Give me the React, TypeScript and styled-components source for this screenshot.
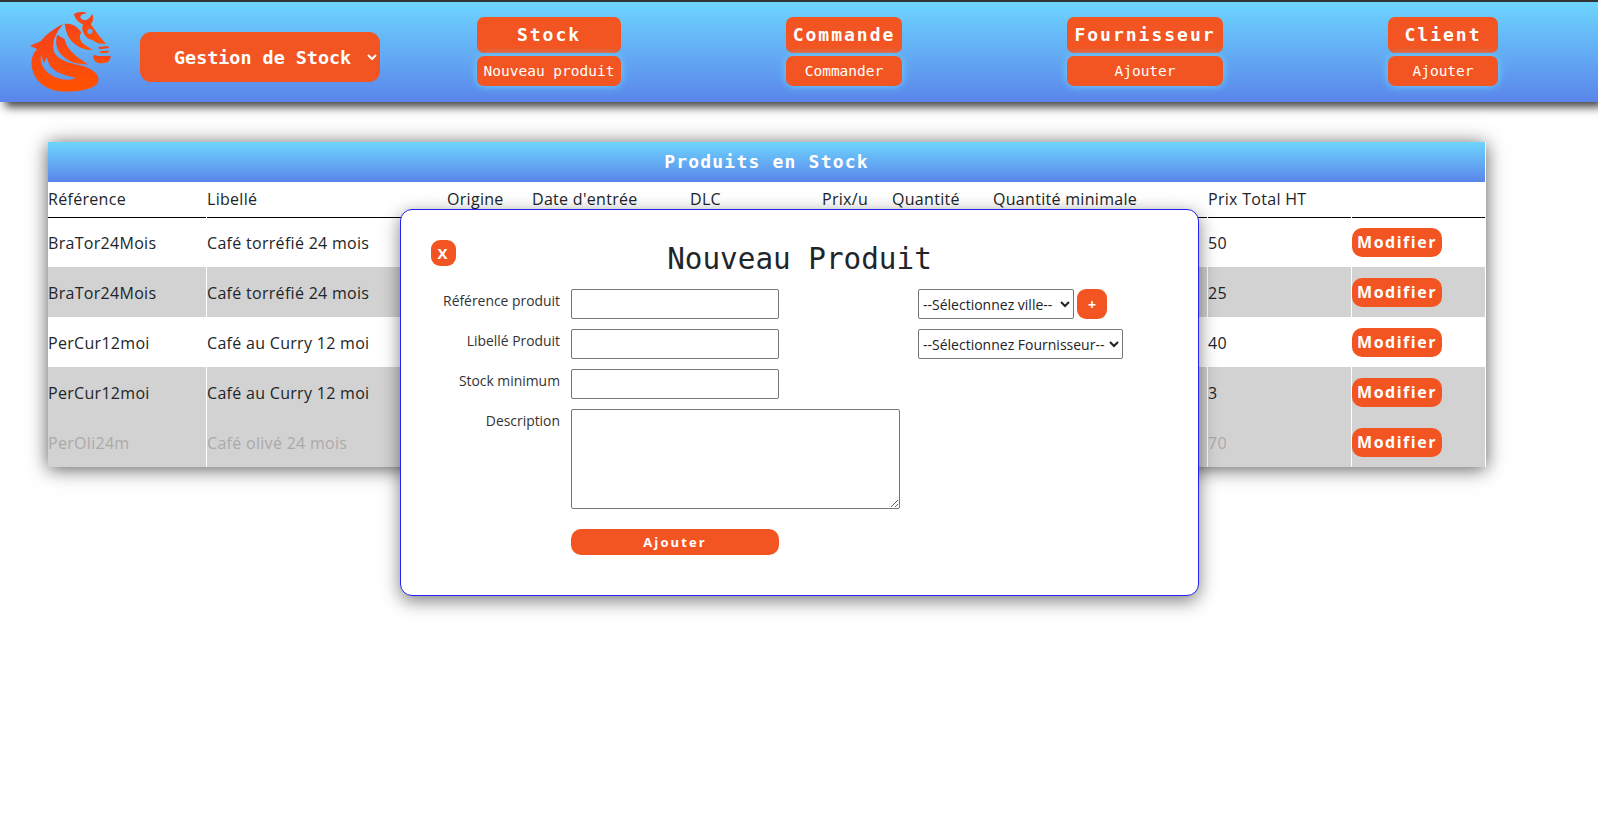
import styled, { createGlobalStyle } from 'styled-components';

const ORANGE = '#f25522';
const MONO = '"DejaVu Sans Mono", monospace';
const SKY = 'linear-gradient(to bottom, #6dd5fe, #5a85ea)';

const GlobalStyle = createGlobalStyle`
  body {
    margin: 0;
    background: #fff;
    color: #212529;
    font-family: "Open Sans", sans-serif;
  }
  * { box-sizing: border-box; }
`;

const Header = styled.header`
  display: flex;
  align-items: flex-start;
  height: 102px;
  padding-left: 20px;
  border-top: 2px solid #333;
  background: ${SKY};
  box-shadow: 5px 5px 9px rgba(0, 0, 0, 0.75);
`;

const LogoMark = styled.svg`
  width: 100px;
  height: 100px;
  flex: none;
`;

const AppSelect = styled.select`
  width: 240px;
  height: 50px;
  margin: 30px 97px 0 20px;
  padding-left: 30px;
  border: none;
  border-radius: 11px;
  background: ${ORANGE};
  color: #fff;
  font-family: ${MONO};
  font-size: 18.4px;
  font-weight: 700;
`;

const MenuGroups = styled.nav`
  display: flex;
  gap: 165px;
  margin-top: 15px;
`;

const MenuGroup = styled.div`
  display: flex;
  flex-direction: column;
  gap: 3px;
`;

const MenuTitle = styled.a<{ $width: number }>`
  display: flex;
  align-items: center;
  justify-content: center;
  width: ${p => p.$width}px;
  height: 36px;
  padding-bottom: 2px;
  border-radius: 7px;
  background: ${ORANGE};
  color: #fff;
  font-family: ${MONO};
  font-size: 18px;
  font-weight: 700;
  letter-spacing: 2px;
`;

const MenuLink = styled.a`
  display: flex;
  align-items: center;
  justify-content: center;
  height: 30px;
  border-radius: 7px;
  background: ${ORANGE};
  color: #fff;
  font-family: ${MONO};
  font-size: 14.5px;
  box-shadow: 0 0 9px #6dd5fe;
`;

const Main = styled.main`
  min-height: 729px;
  padding: 40px 0 40px 48px;
`;

const StockPanel = styled.section`
  width: 1438px;
  box-shadow: 0 2px 18px rgba(0, 0, 0, 0.65);
`;

const PanelTitle = styled.h2`
  display: flex;
  align-items: center;
  justify-content: center;
  height: 40px;
  margin: 0 1px 0 0;
  padding-bottom: 2px;
  background: ${SKY};
  color: #fff;
  font-family: ${MONO};
  font-size: 18px;
  font-weight: 700;
  letter-spacing: 1.2px;
`;

const TableRow = styled.div`
  display: grid;
  grid-template-columns: 158px 239px 84px 157px 131px 69px 100px 214px 143px 133px;
  column-gap: 1px;
`;

const HeadCell = styled.div`
  display: flex;
  align-items: center;
  height: 35px;
  padding-bottom: 1px;
  font-size: 16px;
  letter-spacing: 0.3px;
  box-shadow: 0 1px 0 #000;
`;

const Cell = styled.div<{ $shaded: boolean; $faded: boolean }>`
  display: flex;
  align-items: center;
  height: 50px;
  padding-top: 1px;
  background: ${p => (p.$shaded ? '#d2d2d2' : 'transparent')};
  color: ${p => (p.$faded ? '#aaa' : 'inherit')};
  font-size: 16px;
  letter-spacing: 0.3px;
`;

const ModifyButton = styled.button`
  width: 90px;
  height: 29px;
  margin-top: -1px;
  padding: 0;
  border: none;
  border-radius: 10px;
  background: ${ORANGE};
  color: #fff;
  font-family: "Open Sans", sans-serif;
  font-size: 16px;
  font-weight: 700;
  letter-spacing: 1.5px;
`;

const Modal = styled.div`
  position: absolute;
  top: 209px;
  left: 400px;
  width: 799px;
  height: 387px;
  padding: 30px;
  border: 1.5px solid #2222ee;
  border-radius: 12px;
  background: #fff;
  box-shadow: 0 5px 18px rgba(0, 0, 0, 0.5);
`;

const ModalHead = styled.div`
  display: grid;
  grid-template-columns: 1fr auto 1fr;
  height: 49px;
`;

const CloseButton = styled.button`
  width: 25px;
  height: 26px;
  padding: 0 2px 0 0;
  border: none;
  border-radius: 9px;
  background: ${ORANGE};
  color: #fff;
  font-family: "Open Sans", sans-serif;
  font-size: 15px;
  font-weight: 700;
`;

const ModalTitle = styled.h1`
  margin: 0;
  font-family: ${MONO};
  font-size: 29.3px;
  font-weight: 400;
  line-height: 38px;
`;

const FormLayout = styled.form`
  display: flex;
`;

const LeftFields = styled.div`
  display: flex;
  flex-direction: column;
  gap: 10px;
  width: 487px;
`;

const FieldRow = styled.div`
  display: grid;
  grid-template-columns: 129px 1fr;
  column-gap: 11px;
`;

const FieldLabel = styled.label`
  padding-top: 2px;
  color: #333;
  font-size: 13.9px;
  line-height: 20px;
  text-align: right;
`;

const TextInput = styled.input`
  width: 208px;
  height: 30px;
  border: 1px solid #767676;
  border-radius: 2px;
`;

const DescriptionArea = styled.textarea`
  display: block;
  width: 329px;
  height: 100px;
  border: 1px solid #767676;
  border-radius: 2px;
`;

const SubmitButton = styled.button`
  width: 208px;
  height: 26px;
  margin-top: 10px;
  padding: 0;
  border: none;
  border-radius: 10px;
  background: ${ORANGE};
  color: #fff;
  font-family: "Open Sans", sans-serif;
  font-size: 13px;
  font-weight: 700;
  letter-spacing: 2.1px;
`;

const RightFields = styled.div`
  display: flex;
  flex-direction: column;
  gap: 10px;
`;

const SelectRow = styled.div`
  display: flex;
  gap: 3px;
`;

const PlainSelect = styled.select<{ $width: number }>`
  width: ${p => p.$width}px;
  height: 30px;
  border: 1px solid #767676;
  border-radius: 2px;
  background: #fff;
  color: #222;
  font-family: "Open Sans", sans-serif;
  font-size: 14px;
`;

const AddButton = styled.button`
  width: 30px;
  height: 30px;
  padding: 0;
  border: none;
  border-radius: 9px;
  background: ${ORANGE};
  color: #fff;
  font-family: "Open Sans", sans-serif;
  font-size: 14px;
  font-weight: 700;
`;

const menus = [
  { title: 'Stock', link: 'Nouveau produit', width: 144 },
  { title: 'Commande', link: 'Commander', width: 116 },
  { title: 'Fournisseur', link: 'Ajouter', width: 156 },
  { title: 'Client', link: 'Ajouter', width: 110 },
];

const columns = ['Référence', 'Libellé', 'Origine', "Date d'entrée", 'DLC', 'Prix/u', 'Quantité', 'Quantité minimale', 'Prix Total HT', ''];

const products = [
  { ref: 'BraTor24Mois', label: 'Café torréfié 24 mois', total: '50', shaded: false, faded: false },
  { ref: 'BraTor24Mois', label: 'Café torréfié 24 mois', total: '25', shaded: true, faded: false },
  { ref: 'PerCur12moi', label: 'Café au Curry 12 moi', total: '40', shaded: false, faded: false },
  { ref: 'PerCur12moi', label: 'Café au Curry 12 moi', total: '3', shaded: true, faded: false },
  { ref: 'PerOli24m', label: 'Café olivé 24 mois', total: '70', shaded: true, faded: true },
];

function Logo() {
  return (
    <LogoMark viewBox="0 6 300 300">
      <defs>
        <linearGradient id="flame" x1="0" y1="0" x2="0" y2="1">
          <stop offset="0" stopColor="#f5401f" />
          <stop offset="1" stopColor="#ff5200" />
        </linearGradient>
      </defs>
      <g fill="url(#flame)">
        <path
          fillRule="evenodd"
          d="M30 137 L62 124 C80 100 105 84 130 72 C110 95 98 118 100 145 C102 172 130 186 172 194 C212 201 240 220 235 245 C226 270 150 280 110 272 C68 265 38 235 35 195 C33 172 42 156 52 148 Z M62 165 C60 198 78 226 120 236 C138 240 155 241 167 233 C130 226 100 214 88 194 L80 172 L72 190 Z"
        />
        <path d="M112 104 C100 140 118 172 166 190 L205 194 C172 172 140 150 134 118 Z" />
        <path d="M134 72 C158 68 176 84 184 98 C176 108 178 122 194 134 L218 150 C186 152 160 134 146 112 C140 100 136 86 134 72 Z" />
        <path d="M162 42 C172 34 190 34 202 40 C188 42 178 46 182 54 C192 66 206 62 216 42 C222 52 220 66 212 72 L236 106 L258 132 L232 130 C222 118 206 120 198 110 C190 100 182 82 190 74 C176 68 164 56 162 42 Z" />
        <path d="M220 170 C220 162 228 168 234 168 L272 168 C272 182 264 190 242 190 C230 190 220 182 220 170 Z" />
        <path d="M234 142 L262 138 L268 144 L238 148 Z M238 154 L266 152 L266 158 L242 160 Z" />
      </g>
      <circle cx="210" cy="94" r="8" fill="#6aa8f0" />
    </LogoMark>
  );
}

export default function App() {
  return (
    <>
      <GlobalStyle />
      <Header>
        <Logo />
        <AppSelect defaultValue="stock">
          <option value="stock">Gestion de Stock</option>
        </AppSelect>
        <MenuGroups>
          {menus.map(menu => (
            <MenuGroup key={menu.title}>
              <MenuTitle $width={menu.width}>{menu.title}</MenuTitle>
              <MenuLink>{menu.link}</MenuLink>
            </MenuGroup>
          ))}
        </MenuGroups>
      </Header>
      <Main>
        <StockPanel>
          <PanelTitle>Produits en Stock</PanelTitle>
          <TableRow>
            {columns.map((col, i) => (
              <HeadCell key={i}>{col}</HeadCell>
            ))}
          </TableRow>
          {products.map((product, i) => (
            <TableRow key={i}>
              {Array.from({ length: 10 }).map((_, col) => (
                <Cell key={col} $shaded={product.shaded} $faded={product.faded}>
                  {col === 0 && product.ref}
                  {col === 1 && product.label}
                  {col === 8 && product.total}
                  {col === 9 && <ModifyButton>Modifier</ModifyButton>}
                </Cell>
              ))}
            </TableRow>
          ))}
        </StockPanel>
      </Main>
      <Modal>
        <ModalHead>
          <div>
            <CloseButton>X</CloseButton>
          </div>
          <ModalTitle>Nouveau Produit</ModalTitle>
        </ModalHead>
        <FormLayout>
          <LeftFields>
            <FieldRow>
              <FieldLabel>Référence produit</FieldLabel>
              <TextInput />
            </FieldRow>
            <FieldRow>
              <FieldLabel>Libellé Produit</FieldLabel>
              <TextInput />
            </FieldRow>
            <FieldRow>
              <FieldLabel>Stock minimum</FieldLabel>
              <TextInput />
            </FieldRow>
            <FieldRow>
              <FieldLabel>Description</FieldLabel>
              <DescriptionArea />
            </FieldRow>
            <FieldRow>
              <span />
              <SubmitButton type="button">Ajouter</SubmitButton>
            </FieldRow>
          </LeftFields>
          <RightFields>
            <SelectRow>
              <PlainSelect $width={156}>
                <option>--Sélectionnez ville--</option>
              </PlainSelect>
              <AddButton type="button">+</AddButton>
            </SelectRow>
            <PlainSelect $width={205}>
              <option>--Sélectionnez Fournisseur--</option>
            </PlainSelect>
          </RightFields>
        </FormLayout>
      </Modal>
    </>
  );
}
